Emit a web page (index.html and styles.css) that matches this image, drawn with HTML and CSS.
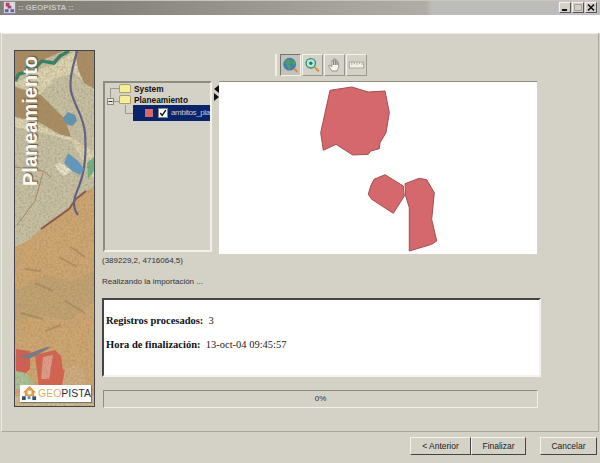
FILE: index.html
```html
<!DOCTYPE html>
<html lang="es">
<head>
  <meta charset="UTF-8" />
  <meta name="viewport" content="width=device-width, initial-scale=1" />
  <title>:: GEOPISTA ::</title>
  <link rel="stylesheet" href="styles.css">
</head>
<body>
  <div class="window">
    <header class="titlebar">
      <svg class="app-icon" viewBox="0 0 14 14">
        <rect x="0.500" y="0.500" width="13" height="13" fill="#dcd8e4" stroke="#8a84a0"/>
        <path d="M3 2h4v3h2v3H5V6H3z" fill="#b8405c"/>
        <path d="M2 9h4v3H2zM8 9h4v3H8z" fill="#5a66a8"/>
      </svg>
      <span class="title">:: GEOPISTA ::</span>
      <div class="winbtns">
        <span class="winbtn"><svg viewBox="0 0 10 9"><path d="M2 6h5v2H2z" fill="#111"/></svg></span>
        <span class="winbtn"><svg viewBox="0 0 10 9"><path d="M1.500 1.500h7v6h-7z" fill="none" stroke="#a5a299"/></svg></span>
        <span class="winbtn"><svg viewBox="0 0 10 9"><path d="M2 1.500l6 6M8 1.500l-6 6" stroke="#111" stroke-width="1.600"/></svg></span>
      </div>
    </header>
    <div class="whitebar"></div>

    <main class="wizard">
      <aside class="banner">
        <svg class="banner-map" viewBox="0 0 79 355" preserveAspectRatio="none">
          <defs>
            <filter id="grain" x="0" y="0" width="100%" height="100%">
              <feTurbulence type="fractalNoise" baseFrequency="0.45" numOctaves="3" seed="4"/>
              <feColorMatrix values="0 0 0 0 0.3  0 0 0 0 0.22  0 0 0 0 0.1  0.9 0 0 0 -0.32"/>
            </filter>
          </defs>
          <rect width="79" height="355" fill="#d2bd90"/>
          <!-- zona clara -->
          <path d="M0 0h79v150l-12 8-6 10-14 10-14 12-12 6H0z" fill="#c6c1a6"/>
          <path d="M0 0h48L30 8l-8 8-12 4-10 8z" fill="#a88a62"/>
          <path d="M0 32l12-6 14-8 12-4 22-14h19v40L60 22 40 28 24 44 0 34z" fill="#ddd5b4"/>
          <path d="M60 0h19v38l-10-6-6-14z" fill="#a98d66"/>
          <path d="M0 36l26 8 24 24 6 18-10-2-24-14L0 66z" fill="#a98c62"/>
          <path d="M0 66l20 6 26 12 10 2 14 10 9 4v28L56 90 30 82 0 76z" fill="#ddd5b4"/>
          <path d="M28 122l-8 28-18 24" fill="none" stroke="#a98a5e"/>
          <path d="M0 116l28 4 8 6" fill="none" stroke="#a98a5e"/>
          <!-- borde inferior -->
          <path d="M0 196l12-6 14-12 14-10 14-10 7-10 10-8 8-4v209H0z" fill="#cfa672"/>
          <path d="M26 178l14-10 14-10 7-10 10-8" fill="none" stroke="#8c5048" stroke-width="2"/>
          <path d="M0 240l30-16 26 6 23-10v30l-24 20-30-6-25 6z" fill="#c2a272"/>
          <path d="M10 218l16 2M20 232l18 8M44 206l18 10M6 262l22 6M50 250l20 12M30 280l16-6M56 196l14 10" stroke="#9a8258" stroke-width="2" opacity=".6"/>
          <!-- rio y carretera -->
          <path d="M0 30l4-7 7-2 2-6 8 1 6-6 12 2 6-7 9-5" fill="none" stroke="#2f7f68" stroke-width="3.500"/>
          <path d="M62 0c-4 16-8 28-6 40 3 14 13 26 14 42 1 14 1 26-2 40-3 14-9 22-9 30 0 5 1 8 4 12" fill="none" stroke="#5d5d8a" stroke-width="2.200"/>
          <path d="M53 61l7 3 2 6-5 5-6-2-3-6z" fill="#5d94b8"/>
          <path d="M58 120l-14-9-4 4 8 10z" fill="#e8e3cc"/>
          <path d="M53 102l10 8 6 8-4 6-8-4-8-8z" fill="#5d9ac8"/>
          <path d="M72 112l7-6v14l-6 8z" fill="#68b488"/>
          <!-- zona roja -->
          <path d="M1 298l14 2v18l-6 6H1z" fill="#d65a50"/>
          <path d="M20 304l20-5 6 6 2 14 8-1 6-4 2 12-4 6-4 0-4 4H24z" fill="#d8604f"/>
          <path d="M28 306l10-2-4 24h-8z" fill="#e39a8c"/>
          <path d="M4 306l28-10 4 0-14 8-8 4z" fill="#77778a"/>
          <path d="M1 320l10 2 6 8 3 8H1z" fill="#a8c49a"/>
          <path d="M50 318l12-4 8 8v18H46z" fill="#d0ad82"/>
          <rect width="79" height="355" filter="url(#grain)"/>
        </svg>
        <span class="banner-title">Planeamiento</span>
        <div class="logo">
          <svg class="logo-icon" viewBox="0 0 18 17">
            <path d="M9 1L2 8h2v4h10V8h2z" fill="#e09a40"/>
            <rect x="7" y="6" width="4" height="4" fill="#fff"/>
            <rect x="1" y="12" width="4" height="4" fill="#33516e"/>
            <rect x="7" y="12" width="3" height="3" fill="#5a90b0"/>
            <rect x="12" y="12" width="4" height="4" fill="#33516e"/>
          </svg>
          <span class="logo-geo">GEO</span><span class="logo-pista">PISTA</span>
        </div>
      </aside>

      <section class="content">
        <div class="toolbar-row">
          <div class="toolbar">
            <span class="tool tool-on">
              <svg viewBox="0 0 20 20">
                <circle cx="9" cy="9" r="7.500" fill="#3f7cc0"/>
                <path d="M3 6l5-3 3 3-2 3 2 4-3 3-3-6zM12 4l4 3-1 3-3-1z" fill="#4f9e5a"/>
                <path d="M14 14l4 4" stroke="#d98a3a" stroke-width="2.400"/>
              </svg>
            </span>
            <span class="tool tool-up">
              <svg viewBox="0 0 20 20">
                <circle cx="8" cy="8" r="5.500" fill="#bfe6da" stroke="#2f8f7a" stroke-width="1.600"/>
                <circle cx="8" cy="8" r="2" fill="#1f7a68"/>
                <path d="M12.500 12.500l5 5" stroke="#d98a3a" stroke-width="2.400"/>
              </svg>
            </span>
            <span class="tool tool-up">
              <svg viewBox="0 0 20 20"><path d="M7 17l-4-6 1-1 3 2V5l1.500-.5L9 10V3l1.500-.5L11 10V4l1.500 0 .5 6V6l1.500.5L15 12l-2 5z" fill="#f6f5ef" stroke="#77756c" stroke-width=".8"/></svg>
            </span>
            <span class="tool tool-up">
              <svg viewBox="0 0 20 20"><rect x="1.500" y="6.500" width="17" height="7" fill="#f2f0e6" stroke="#a09d92"/><path d="M4.500 7v3M7.500 7v2M10.500 7v3M13.500 7v2M16.500 7v3" stroke="#a09d92"/></svg>
            </span>
          </div>
        </div>

        <div class="split">
          <div class="tree">
            <svg class="tree-lines" viewBox="0 0 40 40">
              <path d="M5.500 5.500H14M5.500 5.500V15M8.500 18.500H14M20.500 22v8.500H28" fill="none" stroke="#9a978e"/>
              <rect x="2.500" y="15.500" width="6" height="6" fill="#e8e6de" stroke="#8a877e"/>
              <path d="M3.500 18.500h4" stroke="#333"/>
            </svg>
            <div class="tree-row row-system"><span class="folder"></span><b>System</b></div>
            <div class="tree-row row-plan"><span class="folder"></span><b>Planeamiento</b></div>
            <div class="tree-row row-layer">
              <span class="swatch"></span>
              <span class="check"><svg viewBox="0 0 10 10"><path d="M1.500 5l2.500 3 4.500-6.500" fill="none" stroke="#111" stroke-width="1.800"/></svg></span>
              <span class="layer-name">ambitos_pla</span>
            </div>
          </div>
          <div class="divider">
            <span class="arrow-left"></span>
            <span class="arrow-right"></span>
          </div>
          <div class="map">
            <svg viewBox="0 0 318 172" width="318" height="172">
              <g fill="#d4686c" stroke="#a34e50" stroke-width="1">
                <path d="M111 8.300L132.700 5 149.300 10 166 9 170.300 30.700 167 50.700 161 60.700 160.300 66.700 151.700 69 149.300 72.300 133.700 73 117 62.300 104.300 68.300 101.700 50.700z"/>
                <path d="M155 97.300L166 92.700 184.300 104 185.300 114 174.300 131.300 152.700 117.300 149.300 112.300 151.700 104z"/>
                <path d="M186 101.700L200.300 96.300 207.700 97.700 215.300 110.700 212.700 137.300 217.700 159 212.700 162.300 190.300 169 190.300 125.700 186.700 114z"/>
              </g>
            </svg>
          </div>
        </div>

        <p class="coords">(389229,2, 4716064,5)</p>
        <p class="status">Realizando la importación ...</p>

        <div class="results">
          <p><b>Registros procesados:</b>&nbsp; 3</p>
          <p><b>Hora de finalización:</b>&nbsp; 13-oct-04 09:45:57</p>
        </div>

        <div class="progress">0%</div>
      </section>
    </main>

    <footer class="buttons">
      <button class="btn btn-prev" type="button">&lt; Anterior</button>
      <button class="btn btn-finish" type="button">Finalizar</button>
      <button class="btn btn-cancel" type="button">Cancelar</button>
    </footer>
  </div>
</body>
</html>
```

FILE: styles.css
```css
html, body {
  margin: 0;
  height: 100%;
  overflow: hidden;
}

body {
  background-color: #d4d1c6;
  font-family: "Liberation Sans", Arial, sans-serif;
  font-size: 8px;
  color: #222;
}

.window {
  width: 600px;
  height: 463px;
  display: flex;
  flex-direction: column;
}

.titlebar {
  height: 15px;
  box-sizing: border-box;
  padding: 0 2px 0 3px;
  display: flex;
  align-items: center;
  gap: 2px;
  background: linear-gradient(90deg, #807e76 0%, #85837c 18%, #8f8d86 30%, #a5a29b 55%, #b0ada6 71%, #bcbcba 72%, #bcbcbc 100%);
  border-top: 1px solid #c8c5ba;
}

.app-icon {
  width: 13px;
  height: 13px;
}

.title {
  font-size: 8px;
  font-weight: 700;
  color: #c8c6c0;
  flex: 1;
}

.winbtns {
  display: flex;
  gap: 1px;
  padding: 1px;
  background: #c9c2cb;
}

.winbtn {
  width: 10px;
  height: 9px;
  background: #d4d0c8;
  border: 1px solid;
  border-color: #f4f2ea #555 #555 #f4f2ea;
  display: flex;
}

.winbtn svg {
  width: 100%;
  height: 100%;
}

.whitebar {
  height: 18px;
  background: #fff;
}

.wizard {
  height: 404px;
  box-sizing: border-box;
  margin: 0 1px 0 1px;
  padding: 16px 0 0 12px;
  display: flex;
  gap: 8px;
  border: 1px solid;
  border-color: #eeece4 #a9a69c #a9a69c #eeece4;
}

.banner {
  position: relative;
  width: 81px;
  height: 357px;
  flex: none;
  box-sizing: border-box;
  border: 1px solid #444;
  overflow: hidden;
}

.banner-map {
  width: 100%;
  height: 100%;
  display: block;
}

.banner-title {
  position: absolute;
  left: 0;
  top: 105px;
  width: 30px;
  height: 30px;
  font-size: 20px;
  font-weight: 700;
  line-height: 30px;
  color: #fbf9f0;
  white-space: nowrap;
  text-shadow: 1px 1px 1px #555;
  transform-origin: 15px 15px;
  transform: rotate(-90deg);
}

.logo {
  position: absolute;
  left: 5px;
  bottom: 4px;
  width: 71px;
  height: 17px;
  background: #fff;
  display: flex;
  align-items: center;
  font-size: 10.500px;
  line-height: 1;
  box-shadow: 1px 1px 1px #777;
}

.logo-icon {
  width: 17px;
  height: 16px;
  flex: none;
  margin: 0 0 0 1px;
}

.logo-geo {
  color: #dcb06a;
}

.logo-pista {
  color: #26303c;
}

.content {
  width: 439px;
  flex: none;
  margin-top: 4px;
  display: flex;
  flex-direction: column;
}

.toolbar-row {
  height: 27px;
  flex: none;
  display: flex;
  padding-left: 172px;
}

.toolbar {
  height: 22px;
  display: flex;
  gap: 1px;
  padding: 0 1px 0 3px;
  border-left: 2px solid #f0eee6;
}

.tool {
  width: 21px;
  height: 22px;
  padding: 1px;
  box-sizing: border-box;
  display: flex;
}

.tool svg {
  width: 100%;
  height: 100%;
}

.tool-on {
  border: 1px solid;
  border-color: #77756c #f4f2ea #f4f2ea #77756c;
  background: #c4c1b5;
}

.tool-up {
  border: 1px solid;
  border-color: #f4f2ea #9a978e #9a978e #f4f2ea;
}

.split {
  height: 173px;
  flex: none;
  display: flex;
  align-items: flex-start;
}

.tree {
  position: relative;
  width: 109px;
  height: 171px;
  box-sizing: border-box;
  border: 2px solid;
  border-color: #8f8c82 #f2f0e8 #f2f0e8 #8f8c82;
  overflow: hidden;
}

.tree-lines {
  position: absolute;
  left: 0;
  top: 0;
  width: 40px;
  height: 40px;
}

.tree-row {
  position: absolute;
  display: flex;
  align-items: center;
  height: 12px;
  font-size: 8.300px;
  color: #111;
}

.row-system {
  left: 14px;
  top: 0;
}

.row-plan {
  left: 14px;
  top: 11px;
}

.folder {
  width: 12px;
  height: 9px;
  margin-right: 3px;
  background: #f6ee9c;
  border: 1px solid #a8a268;
  box-sizing: border-box;
  border-radius: 2px 2px 0 0;
}

.row-layer {
  left: 28px;
  top: 22px;
  width: 77px;
  height: 16px;
  background: #0a246a;
  font-size: 8px;
  overflow: hidden;
}

.swatch {
  width: 8px;
  height: 8px;
  flex: none;
  margin-left: 12px;
  background: #d4686c;
}

.check {
  width: 8px;
  height: 8px;
  flex: none;
  margin-left: 5px;
  background: #fff;
  border: 1px solid #888;
  display: flex;
}

.layer-name {
  margin-left: 3px;
  color: #c8c8dc;
  letter-spacing: -0.400px;
  white-space: nowrap;
}

.divider {
  position: relative;
  width: 7px;
  height: 173px;
  flex: none;
}

.arrow-left,
.arrow-right {
  position: absolute;
  left: 2px;
  width: 0;
  height: 0;
  border-top: 4px solid transparent;
  border-bottom: 4px solid transparent;
}

.arrow-left {
  top: 4px;
  border-right: 5px solid #111;
}

.arrow-right {
  top: 12px;
  border-left: 5px solid #111;
}

.map {
  width: 318px;
  height: 173px;
  flex: none;
  box-sizing: border-box;
  background: #fff;
  border-top: 1px solid #8f8c82;
  overflow: hidden;
}

.map svg {
  display: block;
}

.coords,
.status {
  margin: 0 0 0 -1px;
  height: 11px;
  line-height: 11px;
  flex: none;
  color: #333;
}

.coords {
  margin-top: 1px;
}

.status {
  margin-top: 10px;
}

.results {
  height: 79px;
  flex: none;
  margin: 11px 0 0 -1px;
  box-sizing: border-box;
  padding: 14px 0 0 2px;
  width: 439px;
  background: #fff;
  border: 2px solid;
  border-color: #444 #f4f2ea #f4f2ea #444;
  font-family: "Liberation Serif", "Times New Roman", serif;
  font-size: 10.500px;
  color: #222;
}

.results p {
  margin: 0 0 11px;
  line-height: 13px;
}

.results b {
  color: #111;
}

.progress {
  width: 435px;
  height: 18px;
  flex: none;
  margin-top: 13px;
  box-sizing: border-box;
  border: 1px solid;
  border-color: #8f8c82 #f2f0e8 #f2f0e8 #8f8c82;
  text-align: center;
  line-height: 16px;
  color: #333;
}

.buttons {
  height: 26px;
  display: flex;
  justify-content: flex-end;
  align-items: flex-start;
  padding: 5px 3px 0 0;
}

.btn {
  height: 18px;
  padding: 0;
  background: #d4d1c6;
  border: 1px solid;
  border-color: #f4f2ea #444 #444 #f4f2ea;
  font-family: "Liberation Sans", Arial, sans-serif;
  font-size: 8.500px;
  color: #222;
}

.btn-prev {
  width: 61px;
}

.btn-finish {
  width: 55px;
}

.btn-cancel {
  width: 57px;
  margin-left: 14px;
}
```
